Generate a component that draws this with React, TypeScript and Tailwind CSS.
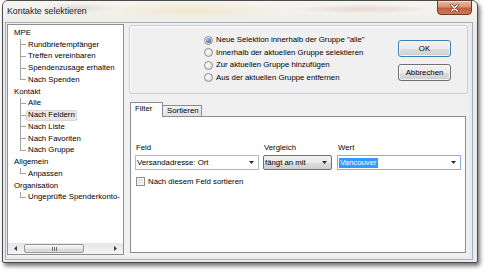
import React from "react";

const groups: { label: string; children: string[] }[] = [
  { label: "MPE", children: ["Rundbriefempfänger", "Treffen vereinbaren", "Spendenzusage erhalten", "Nach Spenden"] },
  { label: "Kontakt", children: ["Alle", "Nach Feldern", "Nach Liste", "Nach Favoriten", "Nach Gruppe"] },
  { label: "Allgemein", children: ["Anpassen"] },
  { label: "Organisation", children: ["Ungeprüfte Spenderkonto-"] },
];

const radios = [
  'Neue Selektion innerhalb der Gruppe "alle"',
  "Innerhalb der aktuellen Gruppe selektieren",
  "Zur aktuellen Gruppe hinzufügen",
  "Aus der aktuellen Gruppe entfernen",
];

function Arrow() {
  return (
    <svg width="5" height="3" viewBox="0 0 5 3" className="shrink-0">
      <path d="M0 0h5L2.5 3z" fill="#2b2b2b" />
    </svg>
  );
}

function ParentRow({ label }: { label: string }) {
  return <div className="h-[11.75px] flex items-center pl-[6px] whitespace-nowrap">{label}</div>;
}

function ChildRow({ label, last, selected }: { label: string; last: boolean; selected: boolean }) {
  return (
    <div className="h-[11.75px] flex">
      <div className="w-[12px] shrink-0" />
      <div className="w-[6px] shrink-0 flex flex-col">
        <div className="flex-1 border-l border-b border-[#a3a3a3]" />
        <div className={last ? "flex-1" : "flex-1 border-l border-[#a3a3a3]"} />
      </div>
      <div className="flex items-center">
        <span
          className={
            selected
              ? "h-[11px] px-[1px] flex items-center whitespace-nowrap border border-[#d6d6d6] bg-[#e8e8e8] rounded-[2px]"
              : "h-[11px] px-[1px] flex items-center whitespace-nowrap border border-transparent"
          }
        >
          {label}
        </span>
      </div>
    </div>
  );
}

function Radio({ checked, label }: { checked: boolean; label: string }) {
  return (
    <div className="h-[12.67px] flex items-center gap-[3px]">
      <span className="w-[9px] h-[9px] rounded-full border border-[#8c8c8c] bg-[radial-gradient(circle_at_35%_35%,#ffffff,#d6d6d6)] flex items-center justify-center shrink-0">
        {checked && (
          <span className="w-[5px] h-[5px] rounded-full bg-[radial-gradient(circle_at_35%_35%,#9cc2ee,#21467f)]" />
        )}
      </span>
      <span className="whitespace-nowrap">{label}</span>
    </div>
  );
}

export default function App() {
  return (
    <div className="w-[488px] h-[275px] bg-white pl-[2px] font-['Liberation_Sans',Arial,sans-serif] text-[7.8px] text-black leading-none overflow-hidden">
      <div className="w-[476px] h-[263px] flex flex-col border border-[#4b4b4b] rounded-t-[6px] rounded-b-[2px] bg-[#e8eaed] shadow-[2px_3px_4px_rgba(0,0,0,0.55)]">
        {/* title bar */}
        <div className="h-[21px] shrink-0 flex items-start justify-between rounded-t-[5px] bg-[radial-gradient(ellipse_40px_5px_at_75px_7px,rgba(120,110,90,0.16),transparent),radial-gradient(ellipse_90px_9px_at_190px_9px,rgba(235,212,150,0.35),transparent),radial-gradient(ellipse_70px_5px_at_360px_8px,rgba(170,95,80,0.18),transparent),linear-gradient(180deg,#f7f5f1,#efede8)]">
          <div className="pl-[4px] h-full flex items-center pb-[1px] text-[8.8px] text-[#1a1a1a] whitespace-nowrap">
            Kontakte selektieren
          </div>
          <div className="-mt-px mr-[5px] w-[35px] h-[15px] shrink-0 rounded-b-[4px] border border-[#6a3a2a] bg-[linear-gradient(180deg,#e9b9a3_0%,#d99376_45%,#c25e3d_55%,#cf7a58_100%)] flex items-center justify-center shadow-[inset_0_1px_0_rgba(255,255,255,0.5)]">
            <svg width="9" height="8" viewBox="0 0 9 8">
              <path d="M1.5 1L7.5 7M7.5 1L1.5 7" stroke="#5a2a1a" strokeWidth="2.6" strokeLinecap="round" />
              <path d="M1.5 1L7.5 7M7.5 1L1.5 7" stroke="#ffffff" strokeWidth="1.5" strokeLinecap="round" />
            </svg>
          </div>
        </div>

        {/* frame body */}
        <div className="flex-1 flex pl-[2px] pr-[4px] pb-[2px]">
          <div className="flex-1 flex border border-[#a9b0b8] pl-[1px] pr-[3px] pb-[2px]">
            {/* client */}
            <div className="flex-1 flex bg-[#f0f0f0]">
              {/* tree */}
              <div className="w-[117px] mt-[1px] mb-[2px] shrink-0 flex flex-col border border-[#8e8f8f] bg-white overflow-hidden">
                <div className="flex-1 pt-[2px] overflow-hidden">
                  {groups.map((g) => (
                    <div key={g.label}>
                      <ParentRow label={g.label} />
                      {g.children.map((c, i) => (
                        <ChildRow
                          key={c}
                          label={c}
                          last={i === g.children.length - 1}
                          selected={c === "Nach Feldern"}
                        />
                      ))}
                    </div>
                  ))}
                </div>
                {/* scrollbar */}
                <div className="h-[11px] shrink-0 flex items-stretch bg-[linear-gradient(180deg,#e6e6e6,#f4f4f4)]">
                  <div className="w-[15px] flex items-center justify-center">
                    <svg width="3" height="5" viewBox="0 0 3 5">
                      <path d="M3 0v5L0 2.5z" fill="#3a3a3a" />
                    </svg>
                  </div>
                  <div className="ml-[1px] w-[60px] my-[1px] rounded-[2px] border border-[#979797] bg-[linear-gradient(180deg,#f6f6f6_0%,#e9e9e9_50%,#d6d6d6_51%,#dedede_100%)] flex items-center justify-center gap-[1px]">
                    <span className="w-px h-[4px] bg-[#6e6e6e]" />
                    <span className="w-px h-[4px] bg-[#6e6e6e]" />
                    <span className="w-px h-[4px] bg-[#6e6e6e]" />
                  </div>
                  <div className="flex-1" />
                  <div className="w-[15px] flex items-center justify-center">
                    <svg width="3" height="5" viewBox="0 0 3 5">
                      <path d="M0 0v5L3 2.5z" fill="#3a3a3a" />
                    </svg>
                  </div>
                </div>
              </div>

              {/* right column */}
              <div className="w-[339px] ml-[5px] shrink-0 flex flex-col">
                {/* options group */}
                <div className="mt-[2px] h-[69px] shrink-0 flex border border-[#c8ced4] rounded-[3px] shadow-[inset_1px_1px_0_#ffffff]">
                  <div className="pl-[74px] pt-[7.7px] flex flex-col">
                    {radios.map((r, i) => (
                      <Radio key={r} label={r} checked={i === 0} />
                    ))}
                  </div>
                  <div className="ml-auto mr-[16px] pt-[14px] flex flex-col gap-[7px]">
                    <div className="w-[53px] h-[17px] rounded-[3px] border border-[#3c7fb1] bg-[linear-gradient(180deg,#f2f2f2_0%,#ebebeb_50%,#dddddd_51%,#cfcfcf_100%)] shadow-[inset_0_0_0_1px_rgba(255,255,255,0.7)] flex items-center justify-center">
                      OK
                    </div>
                    <div className="w-[53px] h-[17px] rounded-[3px] border border-[#707070] bg-[linear-gradient(180deg,#f2f2f2_0%,#ebebeb_50%,#dddddd_51%,#cfcfcf_100%)] shadow-[inset_0_0_0_1px_rgba(255,255,255,0.7)] flex items-center justify-center">
                      Abbrechen
                    </div>
                  </div>
                </div>

                {/* tabs */}
                <div className="mt-[8px] ml-[1px] mr-[2px] mb-[4px] flex-1 flex flex-col">
                  <div className="h-[14px] shrink-0 flex items-end">
                    <div className="relative z-10 -mb-px w-[33px] h-[15px] border border-b-0 border-[#898c95] bg-white pl-[4px] pt-[2px] rounded-t-[1px]">
                      Filter
                    </div>
                    <div className="-ml-px w-[40px] h-[11px] border border-b-0 border-[#898c95] bg-[linear-gradient(180deg,#f4f4f4,#e1e1e1)] pl-[4px] flex items-center rounded-t-[1px]">
                      Sortieren
                    </div>
                  </div>
                  <div className="flex-1 border border-[#898c95] bg-white pl-[4px] pt-[25px]">
                    <div className="flex">
                      <div className="w-[124px] flex flex-col">
                        <div className="h-[11px] pl-[1px] flex items-center">Feld</div>
                        <div className="mt-[2px] h-[15px] border border-[#b4b7bd] bg-white flex items-center pl-[1px] pr-[4px]">
                          <span className="flex-1 whitespace-nowrap">Versandadresse: Ort</span>
                          <Arrow />
                        </div>
                      </div>
                      <div className="ml-[4px] w-[69px] flex flex-col">
                        <div className="h-[11px] pl-[1px] flex items-center">Vergleich</div>
                        <div className="mt-[2px] h-[15px] rounded-[2px] border border-[#707070] bg-[linear-gradient(180deg,#f2f2f2_0%,#ebebeb_50%,#dddddd_51%,#cfcfcf_100%)] flex items-center pl-[1px] pr-[4px]">
                          <span className="flex-1 whitespace-nowrap">fängt an mit</span>
                          <Arrow />
                        </div>
                      </div>
                      <div className="ml-[5px] w-[124px] flex flex-col">
                        <div className="h-[11px] pl-[1px] flex items-center">Wert</div>
                        <div className="mt-[2px] h-[15px] border border-[#7eb4ea] bg-white flex items-center pl-[1px] pr-[4px]">
                          <span className="flex-1 flex">
                            <span className="h-[10px] px-[1px] flex items-center bg-[#3399ff] text-white whitespace-nowrap">
                              Vancouver
                            </span>
                          </span>
                          <Arrow />
                        </div>
                      </div>
                    </div>
                    <div className="mt-[7px] ml-[1px] flex items-center gap-[3px]">
                      <span className="w-[9px] h-[9px] shrink-0 border border-[#8f8f8f] bg-[linear-gradient(135deg,#d9d9d9,#f7f7f7)] shadow-[inset_0_0_0_1px_#f4f4f4]" />
                      <span className="whitespace-nowrap">Nach diesem Feld sortieren</span>
                    </div>
                  </div>
                </div>
              </div>
            </div>
          </div>
        </div>
      </div>
    </div>
  );
}
